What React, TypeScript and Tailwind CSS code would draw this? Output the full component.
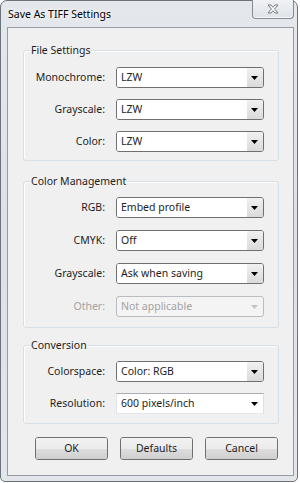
import React from "react";

type Variant = "list" | "edit" | "disabled";

function Arrow({ color }: { color: string }) {
  return (
    <svg width="7" height="4" viewBox="0 0 7 4" className="mt-[1px]">
      <polygon points="0,0 7,0 3.5,4" fill={color} />
    </svg>
  );
}

function Combo({ value, variant = "list" }: { value: string; variant?: Variant }) {
  if (variant === "edit") {
    return (
      <div className="h-[21px] w-[148px] flex border border-[#abadb3] border-r-[#dbdfe6] border-b-[#e3e9ef] border-l-[#e2e3ea] bg-white">
        <div className="flex-1 flex items-center pl-[4px] text-[10.5px] text-[#1e1e1e] whitespace-nowrap">{value}</div>
        <div className="w-[16px] flex items-center justify-center pr-[2px]">
          <Arrow color="#000000" />
        </div>
      </div>
    );
  }
  if (variant === "disabled") {
    return (
      <div className="h-[21px] w-[148px] flex rounded-[3px] border border-[#b9bcc0] bg-[#f4f4f4] overflow-hidden">
        <div className="flex-1 flex items-center pl-[4px] text-[10.5px] text-[#a3a3a3] whitespace-nowrap">{value}</div>
        <div className="w-[16px] flex items-center justify-center pr-[1px]">
          <Arrow color="#c4c4c4" />
        </div>
      </div>
    );
  }
  return (
    <div className="h-[21px] w-[148px] flex rounded-[3px] border border-[#707070] bg-white overflow-hidden">
      <div className="flex-1 flex items-center pl-[4px] text-[10.5px] text-[#1e1e1e] bg-white whitespace-nowrap">{value}</div>
      <div className="w-[16px] flex items-center justify-center pr-[1px] bg-gradient-to-b from-[#f1f1f1] to-[#dadada]">
        <Arrow color="#000000" />
      </div>
    </div>
  );
}

function Row({ label, children, disabled = false }: { label: string; children: React.ReactNode; disabled?: boolean }) {
  return (
    <div className="flex items-center">
      <div
        className={
          disabled
            ? "w-[81px] text-right text-[10.5px] text-[#a3a3a3] whitespace-nowrap"
            : "w-[81px] text-right text-[10.5px] text-[#1e1e1e] whitespace-nowrap"
        }
      >
        {label}
      </div>
      <div className="ml-[11px]">{children}</div>
    </div>
  );
}

function Group({
  title,
  className,
  children,
}: {
  title: string;
  className: string;
  children: React.ReactNode;
}) {
  return (
    <div className={"relative w-[256px] rounded-[3px] border border-[#d5dfe5] shadow-[inset_1px_1px_0_#ffffff] " + className}>
      <div className="absolute left-[6px] top-[-9px] px-[1px] bg-[#f0f0f0] text-[10.5px] leading-[16px] text-[#1e1e1e] whitespace-nowrap">
        {title}
      </div>
      {children}
    </div>
  );
}

function Button({ label }: { label: string }) {
  return (
    <div className="w-[73px] h-[23px] rounded-[3px] border border-[#707070] flex flex-col overflow-hidden shadow-[inset_0_0_0_1px_#fbfbfb]">
      <div className="relative flex-1 flex flex-col">
        <div className="flex-1 bg-gradient-to-b from-[#f2f2f2] to-[#ebebeb]" />
        <div className="flex-1 bg-gradient-to-b from-[#dddddd] to-[#cfcfcf]" />
        <div className="absolute inset-0 flex items-center justify-center text-[10.5px] text-[#1e1e1e]">{label}</div>
      </div>
    </div>
  );
}

export default function App() {
  return (
    <div className="w-[300px] h-[483px] bg-white font-['Noto_Sans',sans-serif]">
      <div className="w-[298px] h-[482px] rounded-t-[7px] rounded-b-[5px] border border-[#6b737b] bg-gradient-to-b from-[#e4e7eb] via-[#dde1e6] to-[#e2e5e9] flex flex-col pl-[6px] pr-[3px] pb-[5px]">
        <div className="h-[26px] flex items-start justify-between">
          <div className="pl-[1px] pt-[5px] text-[10.5px] leading-[16px] text-black whitespace-nowrap [text-shadow:0_0_6px_#ffffff,0_0_3px_#ffffff]">
            Save As TIFF Settings
          </div>
          <div className="mt-[-1px] w-[42px] h-[19px] rounded-b-[4px] border border-t-0 border-[#858b92] bg-gradient-to-b from-[#f0f2f4] to-[#dfe3e8] flex items-center justify-center shadow-[inset_0_-1px_0_#f7f8fa]">
            <svg width="12" height="10" viewBox="0 0 12 10">
              <polygon
                points="1,1 4,1 6,3.3 8,1 11,1 7.6,5 11,9 8,9 6,6.7 4,9 1,9 4.4,5"
                fill="#ffffff"
                stroke="#727880"
                strokeWidth="1"
                strokeLinejoin="round"
              />
            </svg>
          </div>
        </div>
        <div className="flex-1 border border-[#959ba2] bg-[#f0f0f0] flex flex-col pl-[15px]">
          <Group title="File Settings" className="mt-[22px] pt-[16px] pb-[8px] flex flex-col gap-[11px]">
            <Row label="Monochrome:">
              <Combo value="LZW" />
            </Row>
            <Row label="Grayscale:">
              <Combo value="LZW" />
            </Row>
            <Row label="Color:">
              <Combo value="LZW" />
            </Row>
          </Group>
          <Group title="Color Management" className="mt-[20px] pt-[15px] pb-[10px] flex flex-col gap-[12px]">
            <Row label="RGB:">
              <Combo value="Embed profile" />
            </Row>
            <Row label="CMYK:">
              <Combo value="Off" />
            </Row>
            <Row label="Grayscale:">
              <Combo value="Ask when saving" />
            </Row>
            <Row label="Other:" disabled>
              <Combo value="Not applicable" variant="disabled" />
            </Row>
          </Group>
          <Group title="Conversion" className="mt-[17px] pt-[15px] pb-[9px] flex flex-col gap-[11px]">
            <Row label="Colorspace:">
              <Combo value="Color: RGB" />
            </Row>
            <Row label="Resolution:">
              <Combo value="600 pixels/inch" variant="edit" />
            </Row>
          </Group>
          <div className="mt-[13px] flex gap-[12px] pl-[12px]">
            <Button label="OK" />
            <Button label="Defaults" />
            <Button label="Cancel" />
          </div>
        </div>
      </div>
    </div>
  );
}
